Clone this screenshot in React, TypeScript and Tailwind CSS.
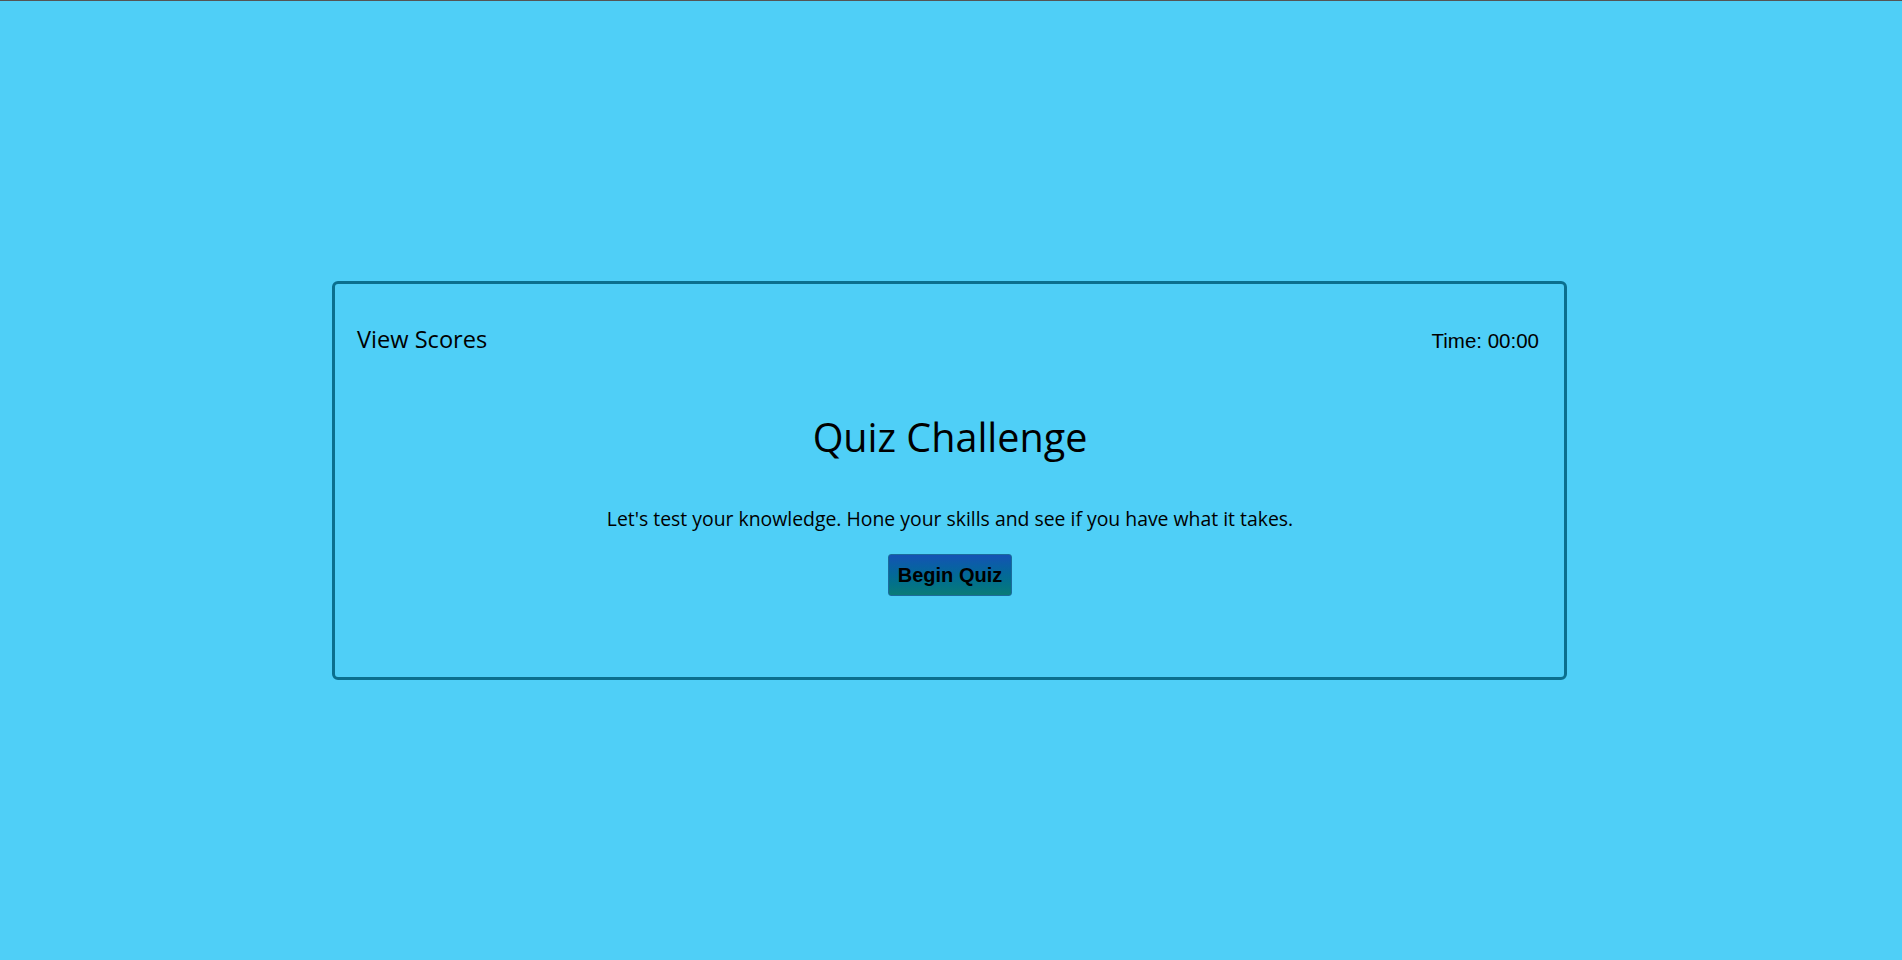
export default function App() {
  return (
    <div className="min-h-screen border-t border-[#555] bg-[#4fcff7] font-['Open_Sans','Noto_Sans',sans-serif] text-black">
      <div className="flex h-[959px] items-center justify-center pr-[3px]">
        <div className="flex h-[399px] w-[1235px] flex-col rounded-md border-[3px] border-[#0b6f8e] pl-[22px] pr-[25px]">
          <div className="mt-[40px] flex items-baseline justify-between">
            <span className="text-[23.6px] leading-[30px]">View Scores</span>
            <span className="font-['Liberation_Sans',Arial,sans-serif] text-[20.5px] leading-[30px]">
              Time: 00:00
            </span>
          </div>
          <div className="flex flex-col items-center pl-[4px]">
            <h1 className="mt-[59px] text-[39.5px] leading-[44px]">Quiz Challenge</h1>
            <p className="mt-[47px] text-[19.4px] leading-[26px]">
              Let's test your knowledge. Hone your skills and see if you have what it takes.
            </p>
            <button className="mt-[22px] h-[42px] rounded-[3px] border border-[#1b6c9c] bg-gradient-to-b from-[#1552b4] to-[#0b7b77] px-[9px] font-['Liberation_Sans',Arial,sans-serif] text-[20px] font-bold">
              Begin Quiz
            </button>
          </div>
        </div>
      </div>
    </div>
  );
}
